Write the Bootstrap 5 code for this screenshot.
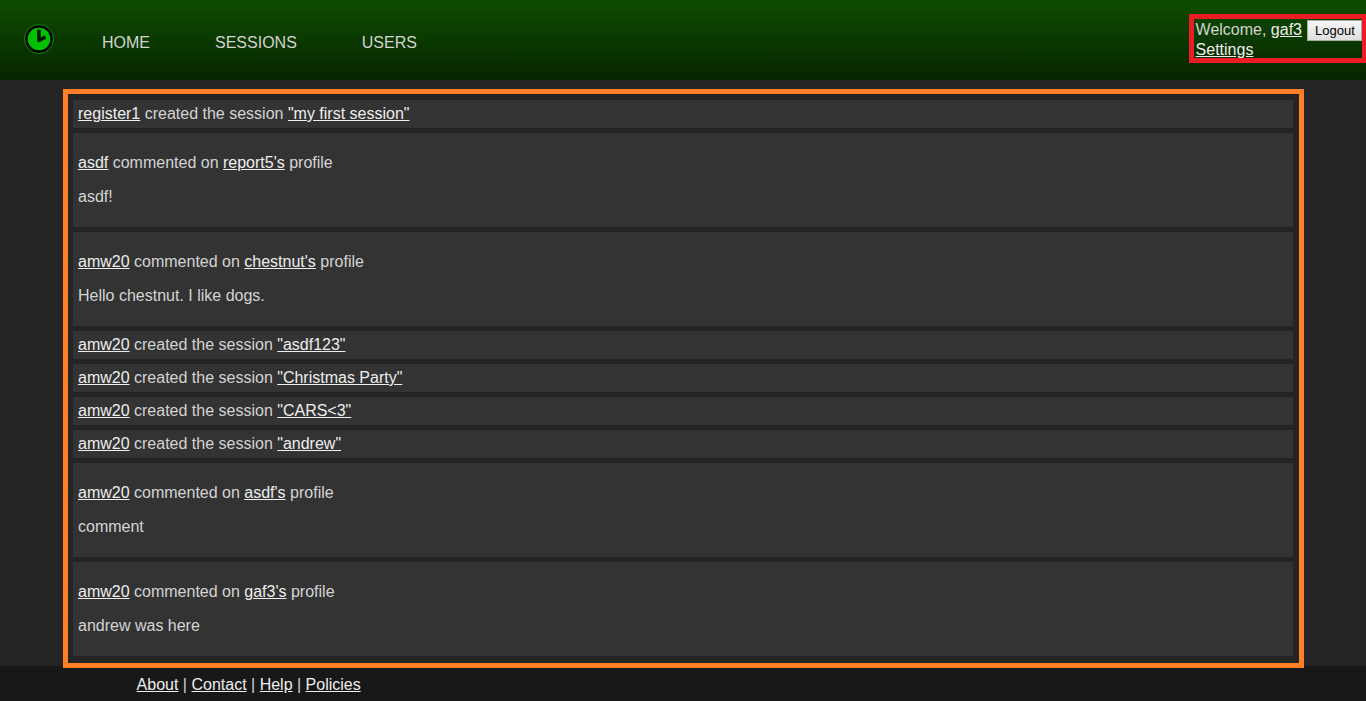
<!DOCTYPE html>
<html lang="en">
<head>
<meta charset="utf-8">
<meta name="viewport" content="width=device-width, initial-scale=1">
<title>Home</title>
<link href="https://cdn.jsdelivr.net/npm/bootstrap@5.3.0/dist/css/bootstrap.min.css" rel="stylesheet">
<style>
  body { background: #242424; color: #d3d3d3; font: 16px/18px "Liberation Sans", Arial, sans-serif; }
  a { color: #eee; text-decoration: underline; }
  a:hover { color: #fff; }
  .topbar { height: 80px; background: linear-gradient(#0e4d00, #062500); }
  .brand-link { margin: 0 46px 2px 22px; line-height: 0; }
  .main-menu { gap: 65px; margin-top: 6px; }
  .main-menu a { color: #d3d3d3; text-decoration: none; }
  .account { border: 5px solid #ed1c24; border-right-width: 4px; margin-top: 14px; padding: 1px 0 0 2px; line-height: 20px; height: 49px; }
  .account-row { height: 20px; gap: 5px; }
  .logout { font: 13px/15px "Liberation Sans", Arial, sans-serif; color: #000; background: linear-gradient(#f6f6f6, #dedede); border: 1px solid #a9a9a9; padding: 2px 7px; height: 21px; width: 55px; }
  .feed { border: 5px solid #ff7f27; margin: 9px 62px -2px 63px; padding: 6px 6px 7px 5px; gap: 5px; position: relative; }
  .feed li { background: #333; padding: 5px; }
  .feed p { margin: 16px 0; }
  .sitefoot { background: #181818; padding: 10px 10% 7px; }
</style>
</head>
<body class="d-flex flex-column min-vh-100">
<header class="topbar d-flex">
  <a href="#" class="brand-link align-self-center" aria-label="Home">
    <svg width="34" height="34" viewBox="0 0 34 34" aria-hidden="true">
      <circle cx="17" cy="17" r="14.5" fill="#000" stroke="#079407" stroke-width="1"/>
      <circle cx="17" cy="17" r="11.3" fill="#00c000"/>
      <path d="M17 7.500v11l6.500-3.500" fill="none" stroke="#001800" stroke-width="3.600" stroke-linejoin="round"/>
    </svg>
  </a>
  <nav class="align-self-center">
    <ul class="main-menu list-unstyled d-flex mb-0">
      <li><a href="#">HOME</a></li>
      <li><a href="#">SESSIONS</a></li>
      <li><a href="#">USERS</a></li>
    </ul>
  </nav>
  <div class="account ms-auto">
    <div class="account-row d-flex align-items-start"><span>Welcome, <a href="#">gaf3</a></span><button type="button" class="logout">Logout</button></div>
    <div><a href="#">Settings</a></div>
  </div>
</header>
<main class="flex-grow-1">
  <ul class="feed list-unstyled d-flex flex-column">
    <li><a href="#">register1</a> created the session <a href="#">"my first session"</a></li>
    <li><p><a href="#">asdf</a> commented on <a href="#">report5's</a> profile</p><p>asdf!</p></li>
    <li><p><a href="#">amw20</a> commented on <a href="#">chestnut's</a> profile</p><p>Hello chestnut. I like dogs.</p></li>
    <li><a href="#">amw20</a> created the session <a href="#">"asdf123"</a></li>
    <li><a href="#">amw20</a> created the session <a href="#">"Christmas Party"</a></li>
    <li><a href="#">amw20</a> created the session <a href="#">"CARS&lt;3"</a></li>
    <li><a href="#">amw20</a> created the session <a href="#">"andrew"</a></li>
    <li><p><a href="#">amw20</a> commented on <a href="#">asdf's</a> profile</p><p>comment</p></li>
    <li><p><a href="#">amw20</a> commented on <a href="#">gaf3's</a> profile</p><p>andrew was here</p></li>
  </ul>
</main>
<footer class="sitefoot"><a href="#">About</a> | <a href="#">Contact</a> | <a href="#">Help</a> | <a href="#">Policies</a></footer>
<script src="https://cdn.jsdelivr.net/npm/bootstrap@5.3.0/dist/js/bootstrap.bundle.min.js"></script>
</body>
</html>
